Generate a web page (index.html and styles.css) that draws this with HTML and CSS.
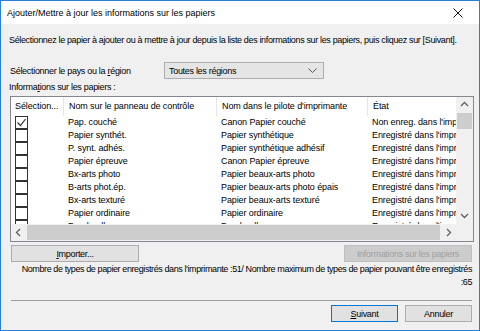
FILE: index.html
```html
<!DOCTYPE html>
<html lang="fr">
<head>
    <meta charset="UTF-8">
    <title>Ajouter/Mettre à jour les informations sur les papiers</title>
    <link rel="stylesheet" href="styles.css">
</head>
<body>

<div class="dialog">
    <div class="titlebar">
        <span class="title">Ajouter/Mettre à jour les informations sur les papiers</span>
        <svg class="close" width="10" height="10" viewBox="0 0 10 10">
            <path d="M0.5 0.5 L9.5 9.5 M9.5 0.5 L0.5 9.5" stroke="#111" stroke-width="1"/>
        </svg>
    </div>

    <div class="content">
        <p class="intro">Sélectionnez le papier à ajouter ou à mettre à jour depuis la liste des informations sur les papiers, puis cliquez sur [Suivant].</p>

        <div class="region-row">
            <span class="region-label">Sélectionner le pays ou la <u>r</u>égion</span>
            <div class="select">
                <span>Toutes les régions</span>
                <svg width="9" height="6" viewBox="0 0 9 6"><path d="M0.5 0.5 L4.5 4.5 L8.5 0.5" fill="none" stroke="#555" stroke-width="1"/></svg>
            </div>
        </div>

        <div class="list-label">Informa<u>t</u>ions sur les papiers :</div>

        <!-- liste des papiers -->
        <div class="listbox">
            <div class="list-view">
                <div class="row header">
                    <div class="col c1">Sélection...</div>
                    <div class="col c2">Nom sur le panneau de contrôle</div>
                    <div class="col c3">Nom dans le pilote d'imprimante</div>
                    <div class="col c4">État</div>
                </div>
                <div class="row">
                    <div class="col c1"><span class="check on"><svg width="11" height="11" viewBox="0 0 11 11"><path d="M1.5 5.5 L4.5 8.5 L9.5 2" fill="none" stroke="#333" stroke-width="1.2"/></svg></span></div>
                    <div class="col c2">Pap. couché</div>
                    <div class="col c3">Canon Papier couché</div>
                    <div class="col c4">Non enreg. dans l'impr.</div>
                </div>
                <div class="row">
                    <div class="col c1"><span class="check"></span></div>
                    <div class="col c2">Papier synthét.</div>
                    <div class="col c3">Papier synthétique</div>
                    <div class="col c4">Enregistré dans l'imprimante</div>
                </div>
                <div class="row">
                    <div class="col c1"><span class="check"></span></div>
                    <div class="col c2">P. synt. adhés.</div>
                    <div class="col c3">Papier synthétique adhésif</div>
                    <div class="col c4">Enregistré dans l'imprimante</div>
                </div>
                <div class="row">
                    <div class="col c1"><span class="check"></span></div>
                    <div class="col c2">Papier épreuve</div>
                    <div class="col c3">Canon Papier épreuve</div>
                    <div class="col c4">Enregistré dans l'imprimante</div>
                </div>
                <div class="row">
                    <div class="col c1"><span class="check"></span></div>
                    <div class="col c2">Bx-arts photo</div>
                    <div class="col c3">Papier beaux-arts photo</div>
                    <div class="col c4">Enregistré dans l'imprimante</div>
                </div>
                <div class="row">
                    <div class="col c1"><span class="check"></span></div>
                    <div class="col c2">B-arts phot.ép.</div>
                    <div class="col c3">Papier beaux-arts photo épais</div>
                    <div class="col c4">Enregistré dans l'imprimante</div>
                </div>
                <div class="row">
                    <div class="col c1"><span class="check"></span></div>
                    <div class="col c2">Bx-arts texturé</div>
                    <div class="col c3">Papier beaux-arts texturé</div>
                    <div class="col c4">Enregistré dans l'imprimante</div>
                </div>
                <div class="row">
                    <div class="col c1"><span class="check"></span></div>
                    <div class="col c2">Papier ordinaire</div>
                    <div class="col c3">Papier ordinaire</div>
                    <div class="col c4">Enregistré dans l'imprimante</div>
                </div>
                <div class="row">
                    <div class="col c1"><span class="check"></span></div>
                    <div class="col c2">Banderolle</div>
                    <div class="col c3">Banderolle</div>
                    <div class="col c4">Enregistré dans l'imprimante</div>
                </div>
            </div>
            <div class="vscroll">
                <svg width="17" height="16" viewBox="0 0 17 16"><path d="M5 9 L8.5 5.5 L12 9" fill="none" stroke="#606060" stroke-width="1.3"/></svg>
                <div class="vthumb"></div>
                <div class="spacer"></div>
                <svg width="17" height="16" viewBox="0 0 17 16"><path d="M5 6 L8.5 9.5 L12 6" fill="none" stroke="#606060" stroke-width="1.3"/></svg>
            </div>
            <div class="hscroll">
                <svg width="16" height="17" viewBox="0 0 16 17"><path d="M9 5 L5.5 8.5 L9 12" fill="none" stroke="#606060" stroke-width="1.3"/></svg>
                <div class="hthumb"></div>
                <svg width="16" height="17" viewBox="0 0 16 17"><path d="M7 5 L10.5 8.5 L7 12" fill="none" stroke="#606060" stroke-width="1.3"/></svg>
            </div>
            <div class="corner"></div>
        </div>

        <div class="button-row">
            <button class="btn wide"><u>I</u>mporter...</button>
            <button class="btn wide" disabled>Informations sur les papiers</button>
        </div>

        <p class="count">Nombre de types de papier enregistrés dans l'imprimante :51/ Nombre maximum de types de papier pouvant être enregistrés<br>:65</p>

        <div class="footer">
            <button class="btn default"><u>S</u>uivant</button>
            <button class="btn">Annuler</button>
        </div>
    </div>
</div>

</body>
</html>
```

FILE: styles.css
```css
body {
    margin: 0;
    font-family: "Liberation Sans", Arial, sans-serif;
    font-size: 9px;
    letter-spacing: -0.3px;
    color: #000;
}
.dialog {
    width: 480px;
    height: 331px;
    box-sizing: border-box;
    border: 1px solid #2b7fd0;
    background: #f0f0f0;
    display: flex;
    flex-direction: column;
    overflow: hidden;
}
.titlebar {
    height: 23px;
    background: #fff;
    display: flex;
    align-items: center;
    justify-content: space-between;
    padding: 0 16px 0 6px;
    flex-shrink: 0;
}
.title {
    font-size: 9px;
    letter-spacing: 0;
}
.content {
    padding: 0 7px 0 8px;
    display: flex;
    flex-direction: column;
}
.intro {
    margin: 10px 0 0 0;
    line-height: 13px;
    white-space: nowrap;
    letter-spacing: -0.35px;
}
.region-row {
    display: flex;
    align-items: center;
    margin-top: 15px;
    height: 17px;
}
.region-label {
    width: 154px;
    padding-left: 1px;
}
.select {
    width: 160px;
    height: 17px;
    box-sizing: border-box;
    border: 1px solid #adadad;
    background: #e5e5e5;
    display: flex;
    align-items: center;
    justify-content: space-between;
    padding: 0 6px 0 4px;
}
.list-label {
    margin-top: 2px;
    line-height: 13px;
}
.listbox {
    margin: 2px 0 0 1px;
    width: 464px;
    height: 146px;
    box-sizing: border-box;
    border: 1px solid #828790;
    background: #fff;
    display: grid;
    grid-template-columns: 445px 17px;
    grid-template-rows: 127px 17px;
}
.list-view {
    overflow: hidden;
    letter-spacing: -0.1px;
}
.row {
    display: flex;
    height: 13px;
    line-height: 13px;
    white-space: nowrap;
}
.row.header {
    height: 19px;
    line-height: 19px;
}
.col {
    flex-shrink: 0;
    overflow: hidden;
    padding-left: 5px;
    box-sizing: border-box;
}
.header .col + .col {
    border-left: 1px solid #e5e5e5;
}
.c1 { width: 52px; padding-left: 4px; }
.c2 { width: 153px; }
.c3 { width: 151px; }
.c4 { width: 130px; }
.row .c1 {
    display: flex;
    align-items: center;
}
.header .c1 { display: block; }
.check {
    width: 13px;
    height: 13px;
    box-sizing: border-box;
    border: 1px solid #333;
    background: #fff;
    display: flex;
    align-items: center;
    justify-content: center;
}
.vscroll {
    background: #f0f0f0;
    display: flex;
    flex-direction: column;
}
.vthumb {
    height: 16px;
    margin: 0 1px;
    background: #cdcdcd;
}
.spacer { flex: 1; }
.hscroll {
    background: #f0f0f0;
    display: flex;
    align-items: stretch;
}
.hthumb {
    flex: 1;
    margin: 1px 0;
    background: #cdcdcd;
}
.corner {
    background: #f0f0f0;
}
.button-row {
    display: flex;
    justify-content: space-between;
    margin: 3px 0 0 2px;
}
.btn {
    font-family: inherit;
    font-size: 9px;
    letter-spacing: inherit;
    height: 17px;
    padding: 0;
    background: #e1e1e1;
    border: 1px solid #adadad;
    color: #000;
}
.btn.wide { width: 128px; }
.btn[disabled] {
    background: #cccccc;
    border-color: #bfbfbf;
    color: #a0a0a0;
}
.count {
    margin: 1px 0 0 10px;
    text-align: right;
    line-height: 13px;
    white-space: nowrap;
    letter-spacing: -0.4px;
}
.footer {
    margin-top: 11px;
    border-top: 1px solid #a0a0a0;
    display: flex;
    justify-content: flex-end;
    gap: 7px;
    padding-top: 4px;
    margin-left: 2px;
}
.footer .btn { width: 67px; height: 17px; }
.btn.default {
    border-color: #0078d7;
}
```
